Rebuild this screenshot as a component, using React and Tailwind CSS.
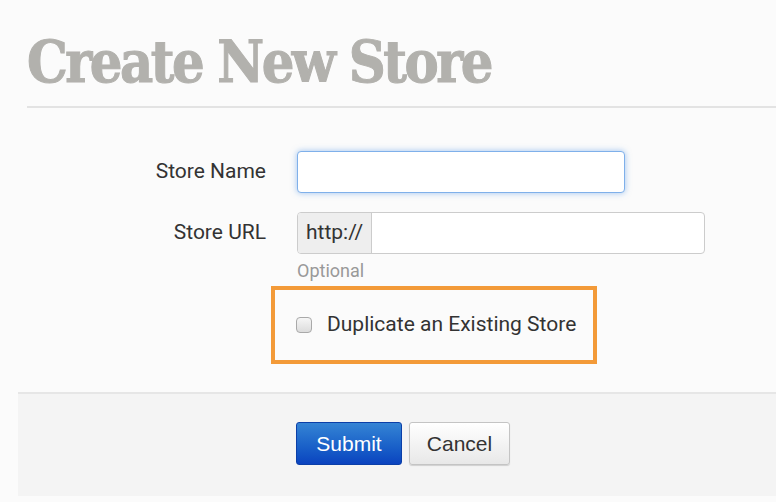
import React from 'react';

const App = () => {
    return (
        <div className="min-h-[502px] w-[776px] bg-[#fbfbfb] overflow-hidden" style={{ fontFamily: 'Roboto, "Noto Sans", sans-serif' }}>
            <div className="pl-[27px] pt-[30px]">
                <h1 className="text-[#b2b1ad] font-bold text-[57px] leading-[64px] tracking-[-2.5px] [-webkit-text-stroke:1px_#b2b1ad]" style={{ fontFamily: '"DejaVu Serif Condensed", "DejaVu Serif", serif', fontStretch: 'condensed' }}>
                    Create New Store
                </h1>
                <div className="mt-[12px] h-[2px] bg-[#e3e3e3]"></div>
            </div>

            <form className="pt-[43px]" onSubmit={(e) => e.preventDefault()}>
                <div className="flex items-center h-[42px]">
                    <label className="w-[266px] text-right text-[21px] text-[#333]">Store Name</label>
                    <input
                        autoFocus
                        type="text"
                        className="ml-[31px] w-[328px] h-[42px] rounded-[4px] border border-[#7fb0ea] bg-white px-3 text-[21px] outline-none shadow-[0_0_6px_rgba(82,148,230,0.55)]"
                    />
                </div>

                <div className="mt-[19px] flex items-center h-[42px]">
                    <label className="w-[266px] text-right text-[21px] text-[#333]">Store URL</label>
                    <div className="ml-[31px] flex w-[408px] h-[42px] rounded-[4px] border border-[#ccc] bg-white overflow-hidden">
                        <span className="flex items-center w-[74px] bg-[#eee] border-r border-[#ccc] pl-[8px] text-[21px] text-[#333]">http://</span>
                        <input type="text" className="flex-1 px-3 text-[21px] outline-none" />
                    </div>
                </div>
                <div className="ml-[297px] mt-[5px] text-[18px] leading-[24px] text-[#999]">Optional</div>

                <div className="ml-[271px] mt-[3px] w-[326px] h-[78px] border-[4px] border-[#f39a38] flex items-center pl-[21px]">
                    <label className="flex items-center gap-[15px] text-[21px] text-[#333]">
                        <span className="w-[16px] h-[16px] rounded-[4px] border border-[#a9a9a9] bg-gradient-to-b from-[#f6f6f6] to-[#dcdcdc]"></span>
                        Duplicate an Existing Store
                    </label>
                </div>

                <div className="ml-[18px] mt-[28px] h-[104px] bg-[#f4f4f4] border-t-2 border-[#e6e6e6] flex items-center pl-[278px] gap-[7px] pb-[3px]" style={{ fontFamily: '"Liberation Sans", Arial, sans-serif' }}>
                    <button type="submit" className="w-[106px] h-[43px] rounded-[3px] border border-[#0b3fa8] bg-gradient-to-b from-[#3584d4] to-[#0c43bf] text-white text-[21px]">
                        Submit
                    </button>
                    <button type="button" className="w-[101px] h-[43px] rounded-[3px] border border-[#c4c4c4] bg-gradient-to-b from-[#ffffff] to-[#e8e8e8] text-[#333] text-[21px] shadow-[0_1px_1px_rgba(0,0,0,0.15)]">
                        Cancel
                    </button>
                </div>
            </form>
        </div>
    );
};

export default App;
